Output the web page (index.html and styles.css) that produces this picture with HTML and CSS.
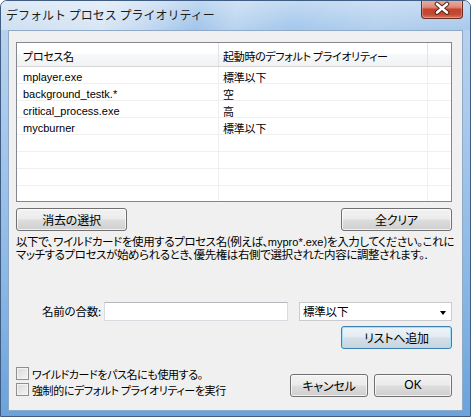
FILE: index.html
```html
<!DOCTYPE html>
<html lang="ja">
<head>
<meta charset="utf-8">
<title>デフォルト プロセス プライオリティー</title>
<link rel="stylesheet" href="styles.css">
</head>
<body>
<div class="window">
  <div class="titlebar">
    <div class="title">デフォルト プロセス プライオリティー</div>
    <div class="close">
      <svg width="42" height="19" viewBox="0 0 42 19">
        <path d="M16 5 L26 13.5 M26 5 L16 13.5" stroke="#55271d" stroke-width="4.6" stroke-linecap="round" fill="none"/>
        <path d="M16 5 L26 13.5 M26 5 L16 13.5" stroke="#ffffff" stroke-width="2.6" stroke-linecap="round" fill="none"/>
      </svg>
    </div>
  </div>
  <div class="client">
    <div class="list">
      <div class="list-head">
        <div class="cell c1">プロセス名</div>
        <div class="cell c2">起動時のデフォルト プライオリティー</div>
        <div class="cell c3"></div>
      </div>
      <div class="row"><div class="cell c1 lat">mplayer.exe</div><div class="cell c2">標準以下</div><div class="cell c3"></div></div>
      <div class="row"><div class="cell c1 lat">background_testk.*</div><div class="cell c2">空</div><div class="cell c3"></div></div>
      <div class="row"><div class="cell c1 lat">critical_process.exe</div><div class="cell c2">高</div><div class="cell c3"></div></div>
      <div class="row"><div class="cell c1 lat">mycburner</div><div class="cell c2">標準以下</div><div class="cell c3"></div></div>
      <div class="row"><div class="cell c1"></div><div class="cell c2"></div><div class="cell c3"></div></div>
      <div class="row"><div class="cell c1"></div><div class="cell c2"></div><div class="cell c3"></div></div>
      <div class="row"><div class="cell c1"></div><div class="cell c2"></div><div class="cell c3"></div></div>
      <div class="row"><div class="cell c1"></div><div class="cell c2"></div><div class="cell c3"></div></div>
    </div>
    <div class="btn-row">
      <div class="btn wide">消去の選択</div>
      <div class="btn wide">全クリア</div>
    </div>
    <p class="desc">以下で、ワイルドカードを使用するプロセス名(例えば、<span class="lat">mypro*.exe</span>)を入力してください。これに<br>マッチするプロセスが始められるとき、優先権は右側で選択された内容に調整されます。.</p>
    <div class="name-row">
      <div class="label">名前の合数:</div>
      <div class="input"></div>
      <div class="combo"><span>標準以下</span><span class="arrow"></span></div>
    </div>
    <div class="btn wide default add">リストへ追加</div>
    <div class="bottom">
      <div class="checks">
        <div class="check"><span class="box"></span><span>ワイルドカードをパス名にも使用する。</span></div>
        <div class="check"><span class="box"></span><span>強制的にデフォルト プライオリティーを実行</span></div>
      </div>
      <div class="actions">
        <div class="btn small">キャンセル</div>
        <div class="btn small lat">OK</div>
      </div>
    </div>
  </div>
</div>
</body>
</html>
```
FILE: styles.css
```css
html, body {
  margin: 0;
  padding: 0;
}
body {
  width: 471px;
  height: 417px;
  overflow: hidden;
  background: #ffffff;
  font-family: "Noto Sans CJK JP", "Noto Sans", sans-serif;
  font-size: 11px;
  letter-spacing: -0.2px;
  font-feature-settings: "palt";
  color: #000;
}
.lat {
  font-family: "Liberation Sans", "Noto Sans CJK JP", sans-serif;
  font-size: 11px;
  letter-spacing: 0;
}
.window {
  box-sizing: border-box;
  width: 471px;
  height: 417px;
  border: 1px solid #3f5d82;
  border-radius: 7px 7px 0 0;
  background: linear-gradient(to bottom, #bcd4ee 0px, #a9c9ec 120px, #86b5e4 300px, #69a2dc 417px);
  display: flex;
  flex-direction: column;
  overflow: hidden;
}
.titlebar {
  height: 29px;
  flex: none;
  display: flex;
  justify-content: space-between;
  align-items: flex-start;
  padding: 0 7px 0 5px;
  background:
    linear-gradient(to bottom, rgba(255,255,255,0.35), rgba(255,255,255,0) 29px),
    linear-gradient(100deg, #cddff1 0%, #d8e6f4 22%, #c2d8f0 32%, #9fc4eb 42%, #b8d3ef 50%, #a4c7ec 62%, #b2cfee 80%, #a8c9ec 100%);
}
.title {
  margin-top: 6px;
  font-size: 12px;
  line-height: 16px;
  color: #1b1b1b;
  letter-spacing: 0;
  font-feature-settings: normal;
}
.close {
  width: 42px;
  height: 19px;
  margin-top: -1px;
  box-sizing: border-box;
  border: 1px solid #6b2a20;
  border-top: none;
  border-radius: 0 0 4px 4px;
  background: linear-gradient(to bottom, #eab0a3 0%, #dc8a78 40%, #c7432c 52%, #c24a32 80%, #d77a60 100%);
  box-shadow: inset 0 0 0 1px rgba(255,255,255,0.25);
  overflow: hidden;
}
.close svg {
  display: block;
  margin: -1px 0 0 -1px;
}
.client {
  flex: 1;
  margin: 0 7px 5px 7px;
  box-sizing: border-box;
  border: 1px solid #8fa9c7;
  background: #f0f0f0;
  padding: 11px 10px 0 7px;
  display: flex;
  flex-direction: column;
}
.list {
  box-sizing: border-box;
  height: 160px;
  border: 1px solid #828790;
  background: #ffffff;
  overflow: hidden;
  flex: none;
}
.list-head {
  display: flex;
  height: 23px;
  border-bottom: 1px solid #d5d5d5;
  background: linear-gradient(to bottom, #ffffff 0%, #ffffff 50%, #f7f8f9 50%, #f1f2f3 100%);
}
.list-head .cell {
  height: 23px;
  line-height: 20px;
  padding-top: 3px;
  border-right: 1px solid #e3e4e6;
  letter-spacing: -0.3px;
}
.row {
  display: flex;
  height: 16px;
  border-bottom: 1px solid #f0f0f0;
}
.row .cell {
  height: 16px;
  line-height: 14px;
  padding-top: 3px;
  border-right: 1px solid #f0f0f0;
}
.cell {
  box-sizing: border-box;
  white-space: nowrap;
}
.c1 { width: 202px; padding-left: 6px; flex: none; }
.c2 { width: 209px; padding-left: 4px; flex: none; }
.c3 { flex: 1; border-right: none !important; }
.btn-row {
  display: flex;
  justify-content: space-between;
  margin-top: 6px;
}
.btn {
  box-sizing: border-box;
  height: 23px;
  border: 1px solid #707070;
  border-radius: 3px;
  background: linear-gradient(to bottom, #f2f2f2 0%, #ebebeb 48%, #dddddd 52%, #cfcfcf 100%);
  box-shadow: inset 0 0 0 1px rgba(255,255,255,0.7);
  text-align: center;
  line-height: 21px;
  font-size: 12px;
}
.btn.lat { font-size: 12px; }
.wide { width: 111px; }
.small { width: 78px; }
.default {
  border-color: #3c7fb1;
  box-shadow: inset 0 0 0 1px #a6e0f8;
  background: linear-gradient(to bottom, #eef4f8 0%, #e3ebf1 48%, #d3dfe8 52%, #c7d5df 100%);
}
.desc {
  margin: 4px 0 0 0;
  font-size: 11.5px;
  line-height: 12px;
  letter-spacing: -0.4px;
  white-space: nowrap;
}
.desc .lat {
  font-size: 11px;
}
.name-row {
  display: flex;
  margin-top: 42px;
  height: 19px;
  padding-left: 21px;
}
.label {
  width: 64px;
  line-height: 19px;
  text-align: right;
  margin-right: 3px;
  font-size: 11.5px;
}
.input {
  box-sizing: border-box;
  width: 184px;
  height: 19px;
  background: #fff;
  border: 1px solid #d9dce1;
  border-top-color: #b5b8bd;
  margin-right: 11px;
}
.combo {
  box-sizing: border-box;
  width: 153px;
  height: 19px;
  background: #fff;
  border: 1px solid #c9cbce;
  display: flex;
  justify-content: space-between;
  align-items: center;
  padding: 0 5px 0 3px;
  line-height: 17px;
  font-size: 11.5px;
}
.arrow {
  width: 0;
  height: 0;
  border-left: 3.5px solid transparent;
  border-right: 3.5px solid transparent;
  border-top: 4px solid #000;
  margin-top: 2px;
}
.add {
  align-self: flex-end;
  margin-top: 5px;
}
.bottom {
  display: flex;
  justify-content: space-between;
  margin-top: 18px;
}
.checks {
  display: flex;
  flex-direction: column;
}
.check {
  display: flex;
  align-items: flex-start;
  height: 16px;
  line-height: 14px;
  font-size: 11px;
  letter-spacing: -0.4px;
}
.box {
  box-sizing: border-box;
  width: 13px;
  height: 13px;
  border: 1px solid #8e8f8f;
  background: linear-gradient(135deg, #d9d9d9 0%, #f4f4f4 100%);
  box-shadow: inset 0 0 0 1px #f4f4f4;
  margin-right: 3px;
  flex: none;
}
.actions {
  display: flex;
  gap: 6px;
  margin-top: 7px;
}
```
